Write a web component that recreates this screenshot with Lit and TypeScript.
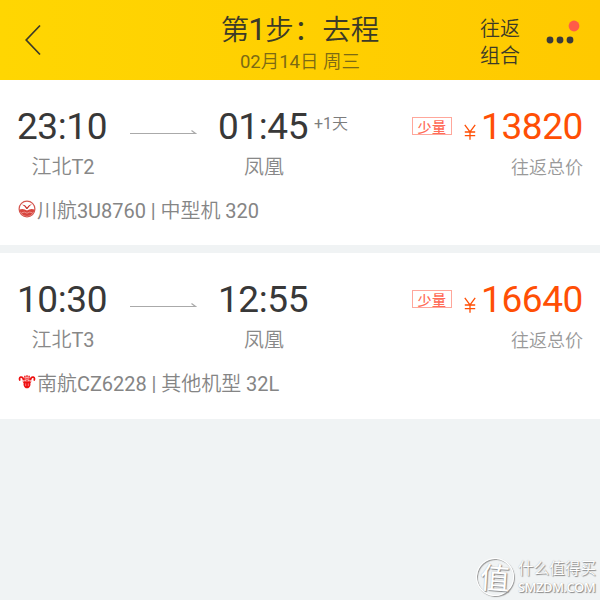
import { LitElement, html, svg, css } from "lit";
import { customElement, property } from "lit/decorators.js";

interface Flight {
  depart: string;
  arrive: string;
  plus: string;
  from: string;
  to: string;
  airline: "sichuan" | "southern";
  info: string;
  price: string;
}

const FLIGHTS: Flight[] = [
  { depart: "23:10", arrive: "01:45", plus: "+1天", from: "江北T2", to: "凤凰", airline: "sichuan", info: "川航3U8760 | 中型机 320", price: "13820" },
  { depart: "10:30", arrive: "12:55", plus: "", from: "江北T3", to: "凤凰", airline: "southern", info: "南航CZ6228 | 其他机型 32L", price: "16640" },
];

const LOGOS = {
  sichuan: svg`
    <circle cx="9" cy="9" r="7.9" fill="#fff" stroke="#d5564f" stroke-width="1.2"/>
    <path d="M1.4 9.6 Q5.5 8.2 9 10.6 Q12.5 8.2 16.6 9.6 A7.7 7.7 0 0 1 1.4 9.6Z" fill="#d8453e"/>
    <path d="M3.5 12.8 Q6.5 11.2 9 13.2 Q11.5 11.2 14.5 12.8" fill="none" stroke="#f6c5c0" stroke-width=".6"/>
    <path d="M4 4.6 Q7.5 4.8 9 7.6 Q10.5 4.8 14 4 Q11 6.3 9.4 9 L8.4 9 Q7 6.3 4 4.6Z" fill="#c8302b"/>`,
  southern: svg`
    <path d="M5.6 7.4 Q5 3.6 2.7 4.1 Q.7 4.8 2 7.6 M12.4 7.4 Q13 3.6 15.3 4.1 Q17.3 4.8 16 7.6" fill="none" stroke="#ee1111" stroke-width="1.7"/>
    <path d="M4.4 8.4 H13.6 L12.4 10 Q13 13.6 10.2 15.2 H7.8 Q5 13.6 5.6 10Z" fill="#ee1111"/>
    <path d="M6.9 2.8 V8.7 M9 2.2 V8.7 M11.1 2.8 V8.7" stroke="#ee1111" stroke-width="1.4" stroke-dasharray="1.9 .4"/>
    <path d="M7.7 10.4 V13 M10.3 10.4 V13" stroke="#fbc" stroke-width=".6"/>`,
};

@customElement("flight-card")
export class FlightCard extends LitElement {
  @property({ attribute: false }) flight!: Flight;

  static styles = css`
    :host { display: block; height: 165.4px; background: #fff; box-sizing: border-box; padding: 24.6px 17px 0 17px; }
    .main { display: flex; height: 74px; }
    .stop { width: 92px; text-align: center; }
    .time { font-size: 37px; line-height: 44px; margin-left: -2px; color: #383838; letter-spacing: -.4px; white-space: nowrap; }
    .city { font-size: 20px; line-height: 24px; margin-top: 6px; color: #888; }
    .arrow { width: 68px; height: 8px; margin: 23.5px 20px 0 21px; }
    .plus { font-size: 16px; line-height: 20px; margin: 9px 0 0 4px; color: #7c7c7c; }
    .fare { margin-left: auto; text-align: right; }
    .amount { display: flex; height: 44px; justify-content: flex-end; }
    .tag { box-sizing: border-box; width: 40px; height: 18px; margin: 12.2px 12px 0 0; border: 1px solid #ffa79b; color: #ff6c58; font: 500 14px/16px "Noto Sans CJK SC", sans-serif; text-align: center; letter-spacing: .6px; }
    .yen { width: 12px; height: 16px; margin: 19.2px 5px 0 0; }
    .price { font-size: 37px; line-height: 44px; color: #ff4f05; letter-spacing: -.4px; }
    .note { font-size: 18px; line-height: 24px; margin-top: 7px; color: #999; }
    .info { display: flex; align-items: center; font-size: 20px; line-height: 24px; margin-top: 20px; color: #858585; white-space: pre; letter-spacing: -.04px; }
    .logo { width: 18px; height: 18px; margin: -3px 1px 0 1px; }
  `;

  render() {
    const f = this.flight;
    return html`
      <div class="main">
        <div class="stop"><div class="time">${f.depart}</div><div class="city">${f.from}</div></div>
        <svg class="arrow" viewBox="0 0 68 8"><path d="M0 5.5 H65.5 L61.5 2.5" fill="none" stroke="#aaa" stroke-width="1.2"/></svg>
        <div class="stop"><div class="time">${f.arrive}</div><div class="city">${f.to}</div></div>
        <div class="plus">${f.plus}</div>
        <div class="fare">
          <div class="amount">
            <span class="tag">少量</span>
            <svg class="yen" viewBox="0 0 12 16"><path d="M.8 .8 L6 8 L11.2 .8 M6 8 V15.8 M.8 8 H11.2 M.8 11.6 H11.2" fill="none" stroke="#ff4f05" stroke-width="1.3"/></svg>
            <span class="price">${f.price}</span>
          </div>
          <div class="note">往返总价</div>
        </div>
      </div>
      <div class="info"><svg class="logo" viewBox="0 0 18 18">${LOGOS[f.airline]}</svg><span>${f.info}</span></div>
    `;
  }
}

@customElement("app-root")
export class AppRoot extends LitElement {
  static styles = css`
    :host { display: block; position: relative; width: 600px; height: 600px; overflow: hidden; background: #f0f3f4; font-family: Roboto, "Noto Sans CJK SC DemiLight", "Noto Sans CJK SC", sans-serif; }
    .bar { display: grid; grid-template-columns: 200px 200px 200px; height: 80px; background: linear-gradient(90deg, #ffd602, #ffc900); color: #3c3a28; }
    .back { width: 18px; height: 32px; margin: 24px 0 0 24px; }
    .heading { text-align: center; white-space: nowrap; }
    .title { font-size: 28.5px; line-height: 36px; margin-top: 13px; }
    .one { font-size: 32px; line-height: 1; margin: 0 -1px; }
    .date { font-size: 18.5px; line-height: 22px; margin-top: 2px; color: #7c6a14; }
    .tools { display: flex; }
    .combo { font-size: 20px; line-height: 27px; margin: 16px 0 0 80px; width: 40px; height: 54px; }
    .more { width: 36px; height: 30px; margin: 18px 0 0 26px; }
    .list { display: flex; flex-direction: column; gap: 8px; }
    .mark { position: absolute; right: 3px; bottom: 4px; display: flex; align-items: center; color: #fff; text-shadow: 1px 1px 1px #888, 0 0 1px #aaa; }
    .seal { width: 36px; height: 36px; border: 1.5px solid #fff; border-radius: 50%; box-shadow: 1px 1px 1px #999, inset 1px 1px 1px #999; font: 30px/34px "Noto Sans CJK SC", sans-serif; text-align: center; transform: rotate(4deg); }
    .brand { margin-left: 4px; width: 79px; white-space: nowrap; }
    .name { font-size: 15.6px; line-height: 20px; font-weight: 500; }
    .site { font: 13px/17px "Open Sans", sans-serif; font-weight: 600; letter-spacing: -.55px; }
  `;

  render() {
    return html`
      <div class="bar">
        <svg class="back" viewBox="0 0 18 32"><path d="M16 1.5 L2.2 16 L16 30.5" fill="none" stroke="#3c3a28" stroke-width="1.7"/></svg>
        <div class="heading"><div class="title">第<span class="one">1</span>步：去程</div><div class="date">02月14日 周三</div></div>
        <div class="tools">
          <div class="combo">往返组合</div>
          <svg class="more" viewBox="0 0 36 30">
            <circle cx="4" cy="22" r="3.4" fill="#3b3b3b"/><circle cx="14" cy="22" r="3.4" fill="#3b3b3b"/><circle cx="24" cy="22" r="3.4" fill="#3b3b3b"/>
            <circle cx="28" cy="8" r="5.4" fill="#ff5c48"/>
          </svg>
        </div>
      </div>
      <div class="list">${FLIGHTS.map((f) => html`<flight-card .flight=${f}></flight-card>`)}</div>
      <div class="mark">
        <div class="seal">值</div>
        <div class="brand"><div class="name">什么值得买</div><div class="site">SMZDM.COM</div></div>
      </div>
    `;
  }
}
